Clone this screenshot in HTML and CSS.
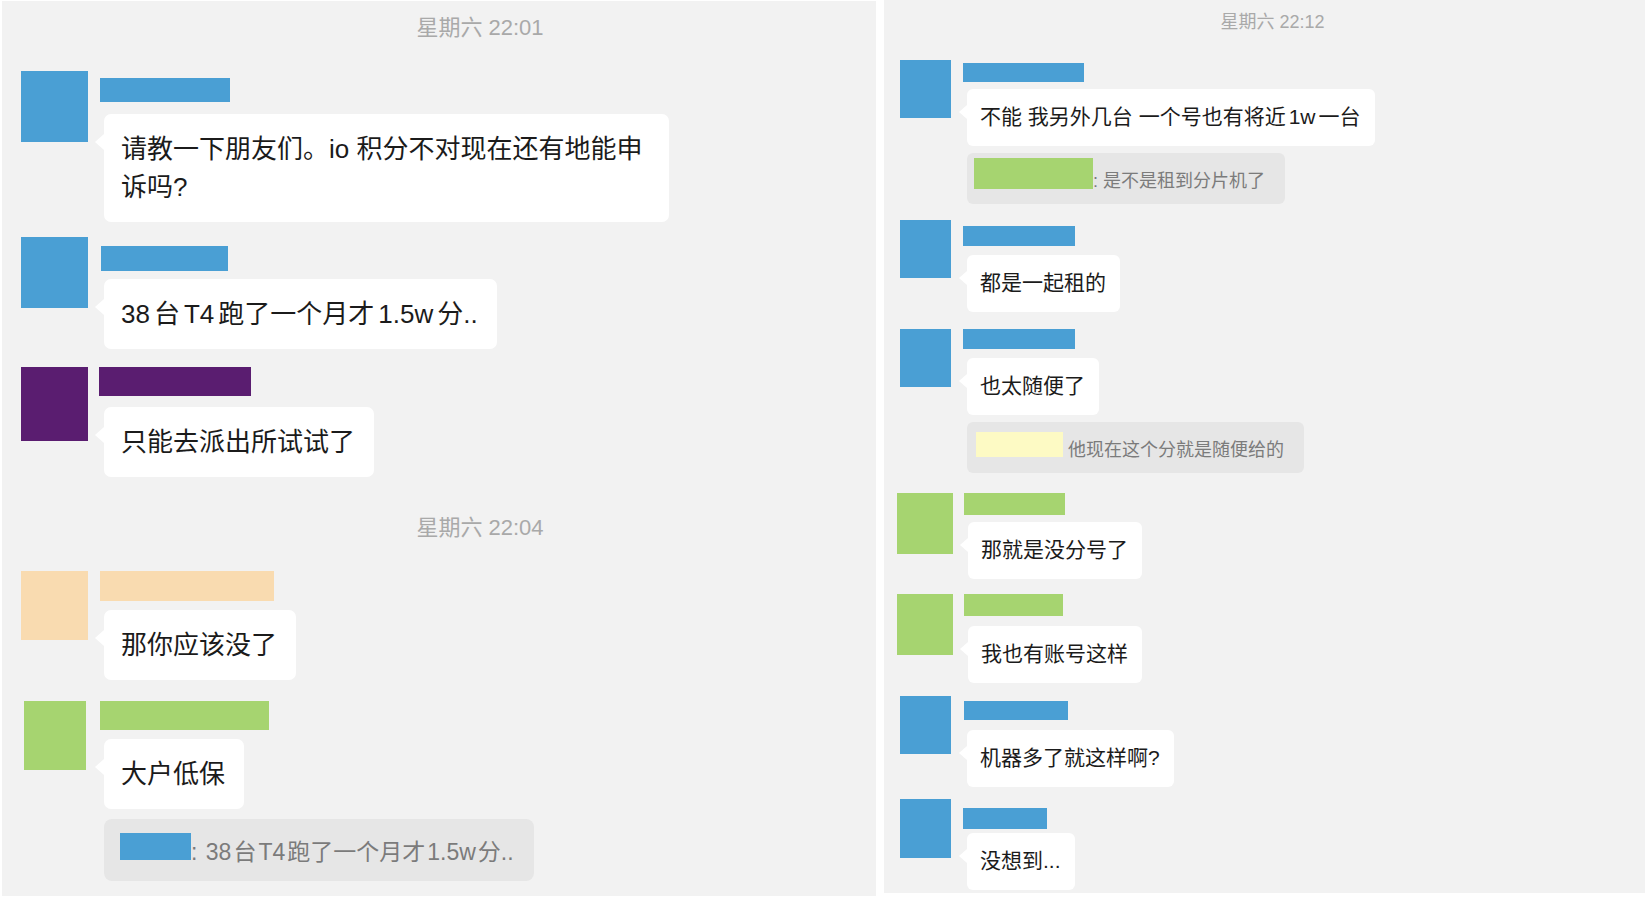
FILE: index.html
```html
<!DOCTYPE html>
<html lang="zh-CN">

<head>
    <meta charset="UTF-8">
    <meta name="viewport" content="width=device-width, initial-scale=1.0">
    <title>聊天记录</title>
    <link rel="stylesheet" href="styles.css">
</head>

<body>
    <div class="screen">
        <!-- 左边截图 -->
        <div class="panel left">
            <div class="time t1">星期六 22:01</div>

            <div class="msg l1">
                <div class="avatar blue"></div>
                <div class="body">
                    <div class="name blue"></div>
                    <div class="bubble">请教一下朋友们。io 积分不对现在还有地能申诉吗?</div>
                </div>
            </div>

            <div class="msg l2">
                <div class="avatar blue"></div>
                <div class="body">
                    <div class="name blue"></div>
                    <div class="bubble"><span class="en">38</span>台<span class="en">T4</span>跑了一个月才<span class="en">1.5w</span>分..</div>
                </div>
            </div>

            <div class="msg l3">
                <div class="avatar purple"></div>
                <div class="body">
                    <div class="name purple"></div>
                    <div class="bubble">只能去派出所试试了</div>
                </div>
            </div>

            <div class="time t2">星期六 22:04</div>

            <div class="msg l4">
                <div class="avatar peach"></div>
                <div class="body">
                    <div class="name peach"></div>
                    <div class="bubble">那你应该没了</div>
                </div>
            </div>

            <div class="msg l5">
                <div class="avatar green"></div>
                <div class="body">
                    <div class="name green"></div>
                    <div class="bubble">大户低保</div>
                    <div class="quote">
                        <span class="tag blue"></span>
                        <span>: <span class="en">38</span>台<span class="en">T4</span>跑了一个月才<span class="en">1.5w</span>分..</span>
                    </div>
                </div>
            </div>
        </div>

        <!-- 右边截图 -->
        <div class="panel right">
            <div class="time">星期六 22:12</div>

            <div class="msg r1">
                <div class="avatar blue"></div>
                <div class="body">
                    <div class="name blue"></div>
                    <div class="bubble">不能 我另外几台 一个号也有将近<span class="en">1w</span>一台</div>
                    <div class="quote">
                        <span class="tag green"></span>
                        <span>: 是不是租到分片机了</span>
                    </div>
                </div>
            </div>

            <div class="msg r2">
                <div class="avatar blue"></div>
                <div class="body">
                    <div class="name blue"></div>
                    <div class="bubble">都是一起租的</div>
                </div>
            </div>

            <div class="msg r3">
                <div class="avatar blue"></div>
                <div class="body">
                    <div class="name blue"></div>
                    <div class="bubble">也太随便了</div>
                    <div class="quote">
                        <span class="tag yellow"></span>
                        <span class="quote-text">他现在这个分就是随便给的</span>
                    </div>
                </div>
            </div>

            <div class="msg r4">
                <div class="avatar green"></div>
                <div class="body">
                    <div class="name green"></div>
                    <div class="bubble">那就是没分号了</div>
                </div>
            </div>

            <div class="msg r5">
                <div class="avatar green"></div>
                <div class="body">
                    <div class="name green"></div>
                    <div class="bubble">我也有账号这样</div>
                </div>
            </div>

            <div class="msg r6">
                <div class="avatar blue"></div>
                <div class="body">
                    <div class="name blue"></div>
                    <div class="bubble">机器多了就这样啊?</div>
                </div>
            </div>

            <div class="msg r7">
                <div class="avatar blue"></div>
                <div class="body">
                    <div class="name blue"></div>
                    <div class="bubble">没想到...</div>
                </div>
            </div>
        </div>
    </div>
</body>

</html>
```

FILE: styles.css
```css
body {
    margin: 0;
    padding: 0;
    background-color: #fff;
    font-family: "Liberation Sans", "Noto Sans CJK SC", sans-serif;
    color: #1b1b1b;
}

.screen {
    display: flex;
    align-items: flex-start;
    width: 1648px;
    height: 898px;
    overflow: hidden;
}

.panel {
    background-color: #f2f2f2;
    box-sizing: border-box;
    overflow: hidden;
}

.left {
    width: 874px;
    height: 895px;
    margin: 1px 0 0 2px;
    padding-left: 19px;
}

.right {
    width: 761px;
    height: 893px;
    margin-left: 8px;
    padding-left: 16px;
}

/* couleurs des zones masquées */
.blue {
    background-color: #4a9fd4;
}

.green {
    background-color: #a6d470;
}

.peach {
    background-color: #f9dbb0;
}

.purple {
    background-color: #5a1d70;
}

.yellow {
    background-color: #fdfac4;
}

.time {
    text-align: center;
    color: #a9a9a9;
}

.left .time {
    font-size: 22px;
    line-height: 30px;
    padding-left: 63px;
}

.right .time {
    font-size: 18px;
    line-height: 24px;
    margin-top: 10px;
}

.t1 {
    margin-top: 12px;
}

.t2 {
    margin-top: 36px;
}

/* petit espace entre chiffres latins et caractères chinois */
.en {
    margin: 0 4px;
}

.en:first-child {
    margin-left: 0;
}

.msg {
    display: flex;
    align-items: flex-start;
}

.avatar {
    flex-shrink: 0;
}

.left .avatar {
    width: 67px;
    height: 71px;
    margin-right: 12px;
}

.right .avatar {
    width: 51px;
    height: 58px;
    margin-right: 12px;
}

.body {
    display: flex;
    flex-direction: column;
    align-items: flex-start;
}

.bubble {
    position: relative;
    background-color: #fff;
    margin-left: 4px;
    box-sizing: border-box;
}

.bubble::before {
    content: "";
    position: absolute;
    border-style: solid;
    border-color: transparent #fff transparent transparent;
}

.left .bubble {
    font-size: 26px;
    line-height: 38px;
    padding: 16px 19px 16px 17px;
    border-radius: 7px;
    max-width: 565px;
}

.left .bubble::before {
    left: -9px;
    top: 20px;
    border-width: 8px 9px 8px 0;
}

.right .bubble {
    font-size: 21px;
    line-height: 30px;
    padding: 13px 14px 14px 13px;
    border-radius: 6px;
}

.right .bubble .en {
    margin: 0 3px;
}

.right .bubble::before {
    left: -8px;
    top: 16px;
    border-width: 7px 8px 7px 0;
}

.quote {
    display: flex;
    align-items: center;
    background-color: #e6e6e6;
    margin-left: 4px;
    color: #7b7b7b;
    white-space: nowrap;
}

.tag {
    flex-shrink: 0;
}

.left .quote {
    height: 62px;
    padding: 0 20px 0 16px;
    font-size: 23px;
    border-radius: 8px;
    margin-top: 10px;
}

.left .quote .en {
    margin: 0 2px;
}

.left .quote .tag {
    width: 71px;
    height: 27px;
    margin-bottom: 7px;
}

.right .quote {
    height: 51px;
    padding: 0 20px 0 7px;
    font-size: 18px;
    border-radius: 6px;
    margin-top: 7px;
}

.quote-text {
    margin-left: 5px;
}

/* lignes de gauche */
.l1 {
    margin-top: 28px;
}

.l1 .name {
    width: 130px;
    height: 24px;
    margin-top: 7px;
}

.l1 .bubble {
    margin-top: 12px;
}

.l2 {
    margin-top: 15px;
}

.l2 .name {
    width: 127px;
    height: 25px;
    margin-top: 9px;
    margin-left: 1px;
}

.l2 .bubble {
    margin-top: 8px;
}

.l3 {
    margin-top: 18px;
}

.l3 .avatar {
    height: 74px;
}

.l3 .name {
    width: 152px;
    height: 29px;
    margin-left: -1px;
}

.l3 .bubble {
    margin-top: 11px;
}

.l4 {
    margin-top: 28px;
}

.l4 .avatar {
    height: 69px;
}

.l4 .name {
    width: 174px;
    height: 30px;
}

.l4 .bubble {
    margin-top: 9px;
}

.l5 {
    margin-top: 21px;
}

.left .l5 .avatar {
    width: 62px;
    height: 69px;
    margin-left: 3px;
    margin-right: 14px;
}

.l5 .name {
    width: 169px;
    height: 29px;
}

.l5 .bubble {
    margin-top: 9px;
}

/* lignes de droite */
.r1 {
    margin-top: 26px;
}

.r1 .name {
    width: 121px;
    height: 19px;
    margin-top: 3px;
}

.r1 .bubble {
    margin-top: 7px;
}

.r1 .tag {
    width: 119px;
    height: 31px;
    margin-bottom: 10px;
}

.r2 {
    margin-top: 16px;
}

.r2 .name {
    width: 112px;
    height: 20px;
    margin-top: 6px;
}

.r2 .bubble {
    margin-top: 9px;
}

.r3 {
    margin-top: 17px;
}

.r3 .name {
    width: 112px;
    height: 20px;
}

.r3 .bubble {
    margin-top: 9px;
}

.r3 .tag {
    width: 87px;
    height: 25px;
    margin-left: 2px;
    margin-bottom: 6px;
}

.r4 {
    margin-top: 20px;
}

.right .r4 .avatar,
.right .r5 .avatar {
    width: 56px;
    height: 61px;
    margin-left: -3px;
    margin-right: 11px;
}

.r4 .name {
    width: 101px;
    height: 22px;
}

.r4 .bubble {
    margin-top: 7px;
}

.r5 {
    margin-top: 15px;
}

.r5 .name {
    width: 99px;
    height: 22px;
}

.r5 .bubble {
    margin-top: 10px;
}

.r6 {
    margin-top: 13px;
}

.r6 .name {
    width: 104px;
    height: 19px;
    margin-top: 5px;
    margin-left: 1px;
}

.r6 .bubble {
    margin-top: 10px;
}

.r7 {
    margin-top: 12px;
}

.r7 .avatar {
    height: 59px;
}

.r7 .name {
    width: 84px;
    height: 21px;
    margin-top: 9px;
}

.r7 .bubble {
    margin-top: 4px;
}
```
